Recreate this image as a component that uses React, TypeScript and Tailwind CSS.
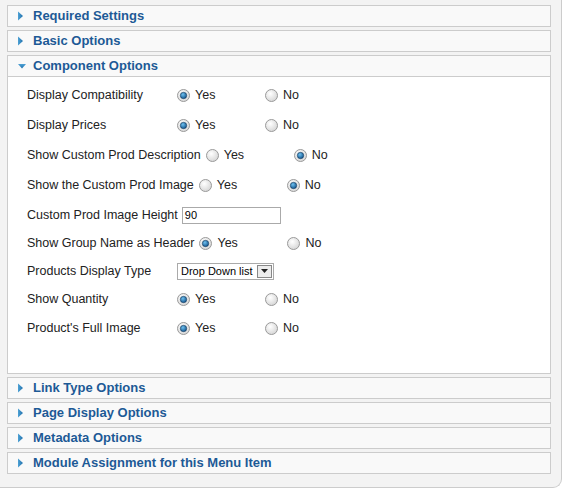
import React from "react";

const collapsedTop = ["Required Settings", "Basic Options"];
const collapsedBottom = [
  "Link Type Options",
  "Page Display Options",
  "Metadata Options",
  "Module Assignment for this Menu Item",
];

function Arrow({ open }: { open?: boolean }) {
  return open ? (
    <svg width="10" height="10" viewBox="0 0 10 10" className="shrink-0">
      <defs>
        <linearGradient id="ad" x1="0" y1="0" x2="0" y2="1">
          <stop offset="0" stopColor="#4fa3d6" />
          <stop offset="1" stopColor="#1f6fab" />
        </linearGradient>
      </defs>
      <path d="M1 3 L9 3 L5 7.5 Z" fill="url(#ad)" />
    </svg>
  ) : (
    <svg width="10" height="10" viewBox="0 0 10 10" className="shrink-0">
      <defs>
        <linearGradient id="ar" x1="0" y1="0" x2="1" y2="0">
          <stop offset="0" stopColor="#4fa3d6" />
          <stop offset="1" stopColor="#1f6fab" />
        </linearGradient>
      </defs>
      <path d="M1 0.5 L6 5 L1 9.5 Z" fill="url(#ar)" />
    </svg>
  );
}

function Header({ title, open }: { title: string; open?: boolean }) {
  return (
    <div className="flex h-5 items-center gap-[6px] bg-[#f9f9f9] pl-[9px] text-[13px] font-bold text-[#1d5a96]">
      <Arrow open={open} />
      <span>{title}</span>
    </div>
  );
}

function Radio({ checked }: { checked?: boolean }) {
  return (
    <svg width="13" height="13" viewBox="0 0 13 13" className="shrink-0">
      <defs>
        <radialGradient id="rg" cx="0.4" cy="0.35" r="0.7">
          <stop offset="0" stopColor="#ffffff" />
          <stop offset="1" stopColor="#d4d4d4" />
        </radialGradient>
        <radialGradient id="rd" cx="0.4" cy="0.35" r="0.7">
          <stop offset="0" stopColor="#6fc0ee" />
          <stop offset="1" stopColor="#0c4f8a" />
        </radialGradient>
      </defs>
      <circle cx="6.5" cy="6.5" r="6" fill="url(#rg)" stroke="#9a9a9a" strokeWidth="1" />
      {checked && <circle cx="6.5" cy="6.5" r="3.2" fill="url(#rd)" stroke="#1a3a5a" strokeWidth="0.6" />}
    </svg>
  );
}

function YesNo({ yes }: { yes: boolean }) {
  return (
    <div className="flex items-center">
      <span className="flex w-[88px] items-center gap-[5px]">
        <Radio checked={yes} />
        Yes
      </span>
      <span className="flex items-center gap-[5px]">
        <Radio checked={!yes} />
        No
      </span>
    </div>
  );
}

function Row({ label, h, children }: { label: string; h: string; children: React.ReactNode }) {
  return (
    <div className={`flex items-center ${h}`}>
      <span className="min-w-[150px] pr-[5px] whitespace-nowrap">{label}</span>
      {children}
    </div>
  );
}

export default function App() {
  return (
    <div className="h-[490px] w-[569px] bg-white" style={{ fontFamily: '"Liberation Sans", Arial, sans-serif' }}>
      <div className="h-[488px] w-[562px] rounded-br-[9px] border-r border-b border-[#cccccc] bg-[#f3f3f3] pt-[5px] pl-[7px]">
        <div className="flex w-[544px] flex-col gap-[3px]">
          {collapsedTop.map((t) => (
            <div key={t} className="border border-[#cccccc]">
              <Header title={t} />
            </div>
          ))}
          <div className="border border-[#cccccc]">
            <div className="border-b border-[#cccccc]">
              <Header title="Component Options" open />
            </div>
            <div className="h-[296px] bg-white pt-[3px] pl-[19px] text-[12.5px] text-[#222]">
              <Row label="Display Compatibility" h="h-[30px]">
                <YesNo yes />
              </Row>
              <Row label="Display Prices" h="h-[30px]">
                <YesNo yes />
              </Row>
              <Row label="Show Custom Prod Description" h="h-[30px]">
                <YesNo yes={false} />
              </Row>
              <Row label="Show the Custom Prod Image" h="h-[30px]">
                <YesNo yes={false} />
              </Row>
              <div className="flex h-[30px] items-center">
                <span className="pr-[4px] whitespace-nowrap">Custom Prod Image Height</span>
                <div className="flex h-[17px] w-[99px] items-center border border-[#aaaaaa] px-[2px] text-[11px] text-black">
                  90
                </div>
              </div>
              <Row label="Show Group Name as Header" h="h-[26px]">
                <YesNo yes />
              </Row>
              <Row label="Products Display Type" h="h-[30px]">
                <div className="flex h-[17px] w-[97px] items-center justify-between border border-[#aaaaaa] pl-[3px] text-[11px] text-black">
                  <span>Drop Down list</span>
                  <span className="mr-[1px] flex h-[13px] w-[15px] items-center justify-center border border-[#888] bg-[#ececec]">
                    <svg width="7" height="4" viewBox="0 0 7 4">
                      <path d="M0 0 L7 0 L3.5 4 Z" fill="#222" />
                    </svg>
                  </span>
                </div>
              </Row>
              <Row label="Show Quantity" h="h-[27px]">
                <YesNo yes />
              </Row>
              <Row label="Product's Full Image" h="h-[30px]">
                <YesNo yes />
              </Row>
            </div>
          </div>
          {collapsedBottom.map((t) => (
            <div key={t} className="border border-[#cccccc]">
              <Header title={t} />
            </div>
          ))}
        </div>
      </div>
    </div>
  );
}
